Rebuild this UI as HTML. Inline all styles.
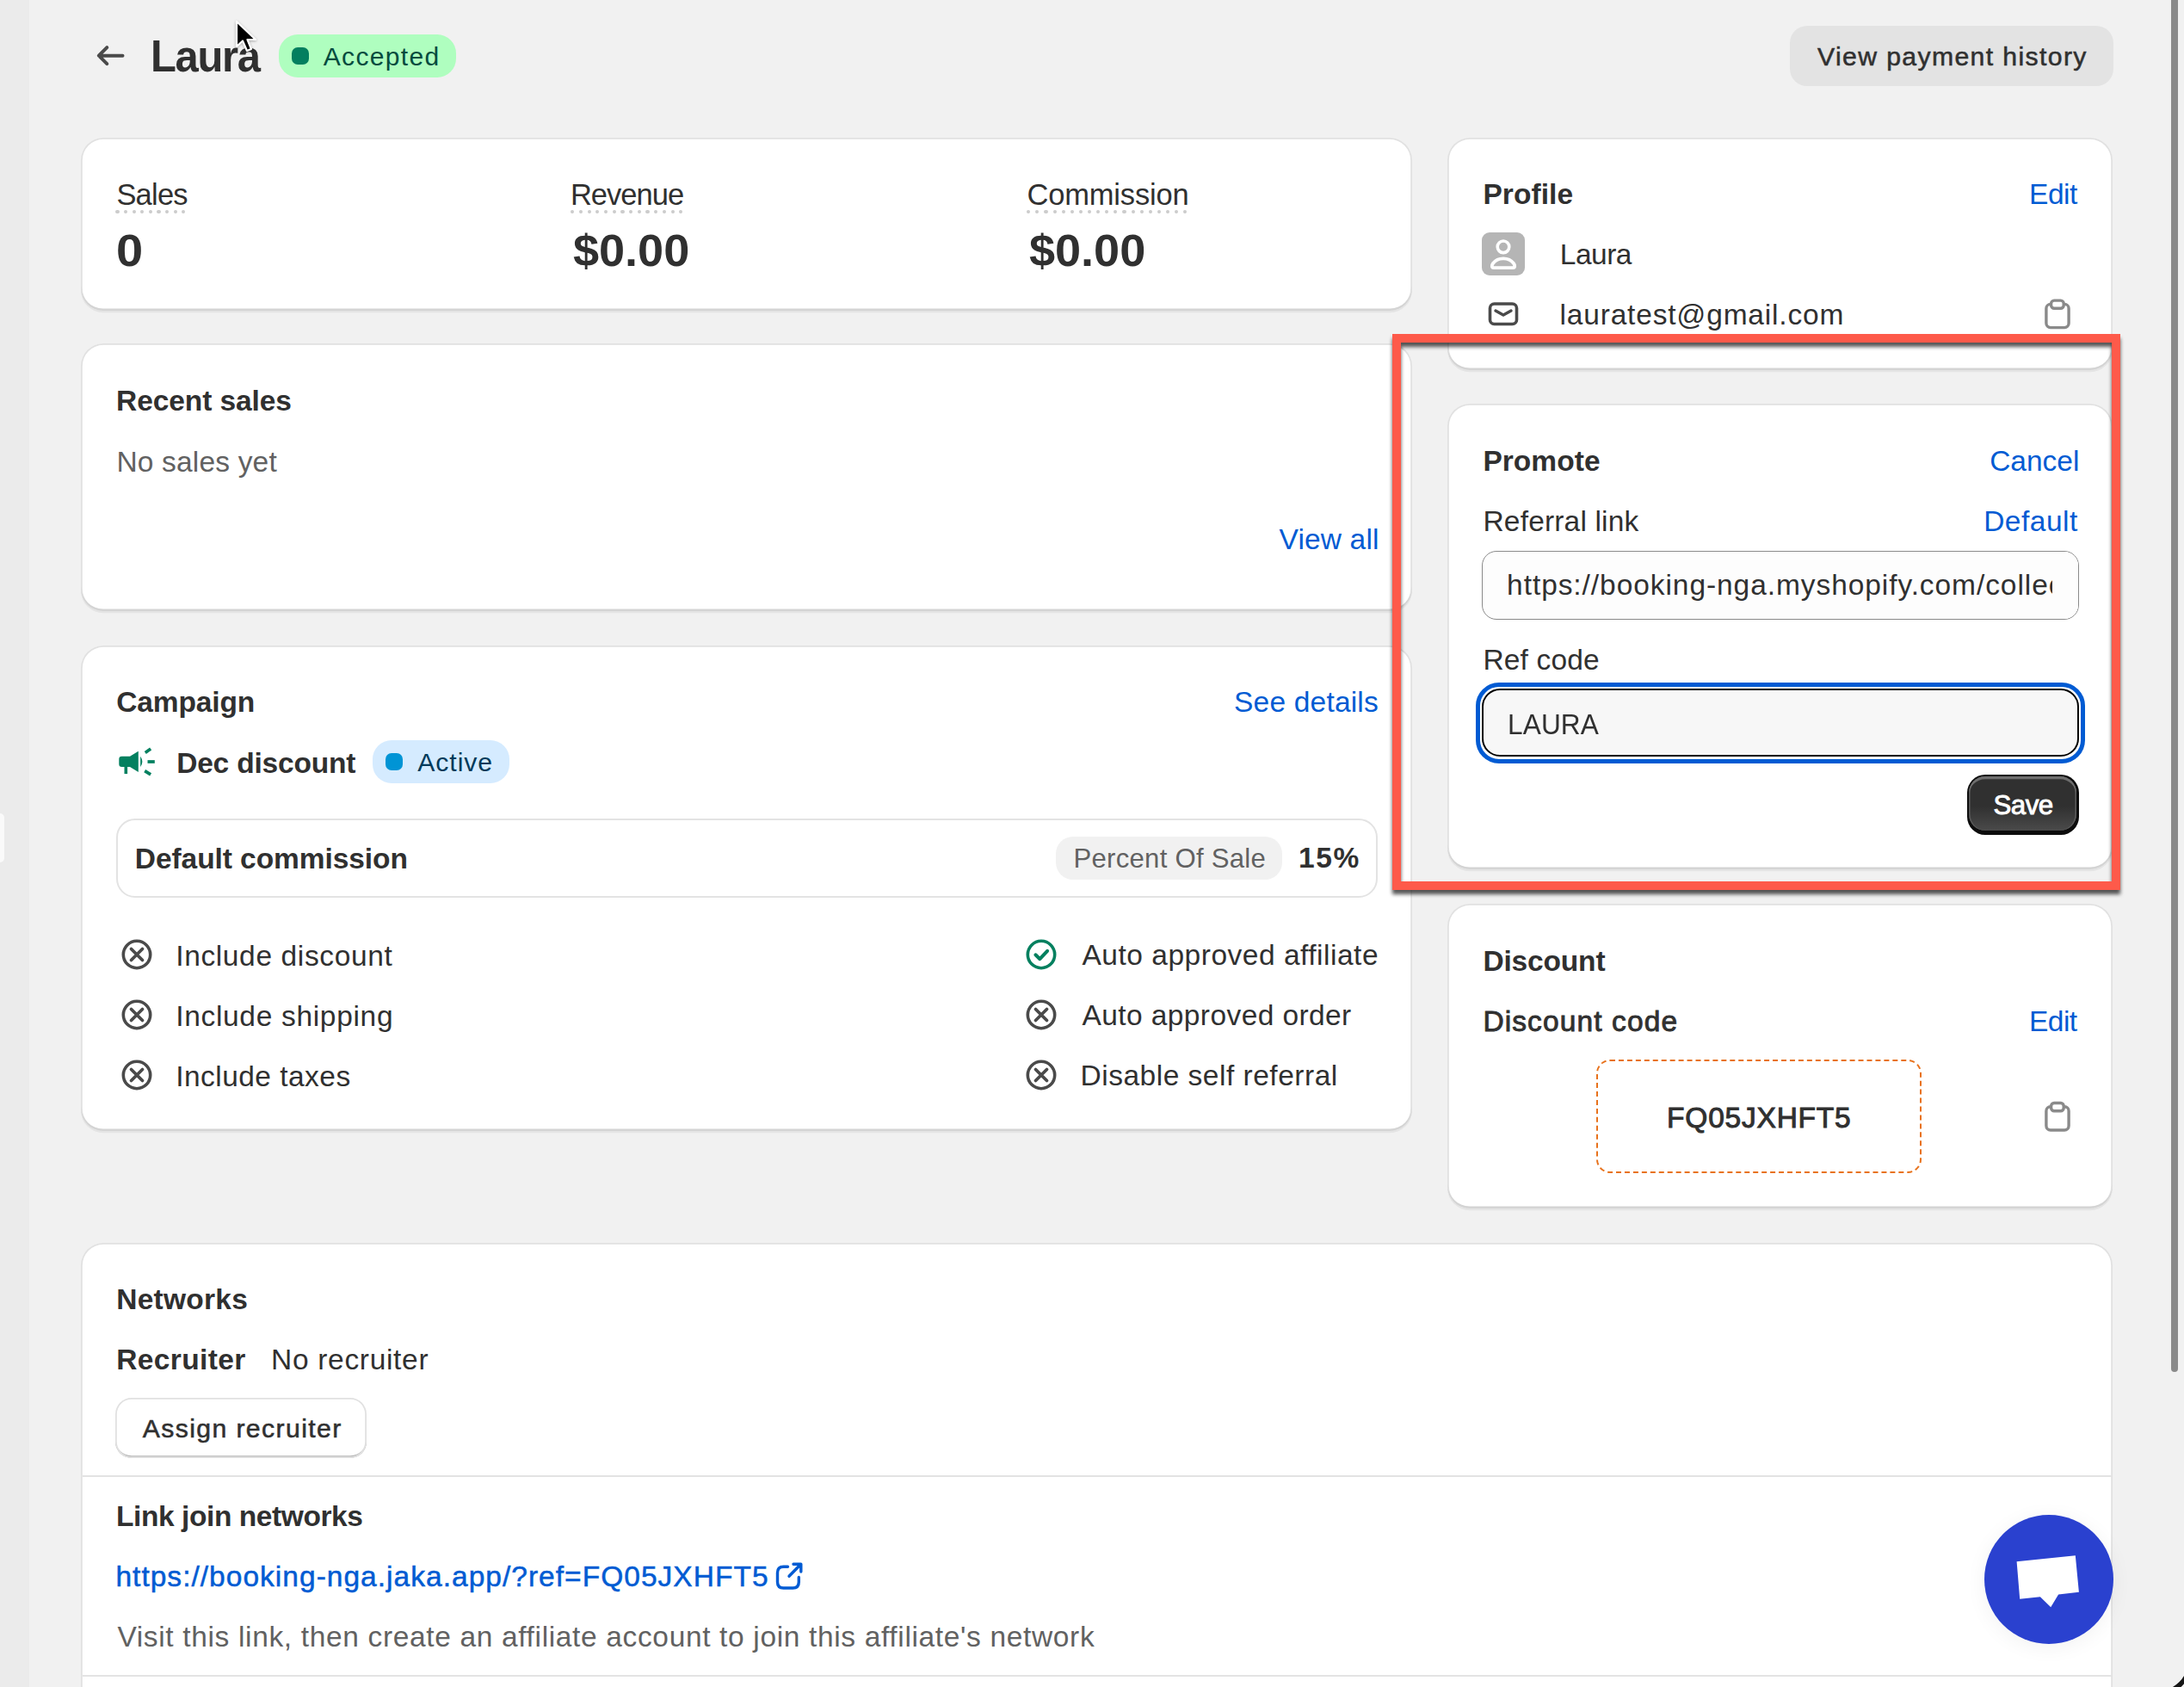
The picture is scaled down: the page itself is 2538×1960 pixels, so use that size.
<!DOCTYPE html>
<html><head><meta charset="utf-8"><style>
html,body{margin:0;padding:0}
body{width:2538px;height:1960px;overflow:hidden;background:#f1f1f1;position:relative;font-family:"Liberation Sans",sans-serif}
.t{position:absolute;white-space:nowrap;line-height:1;font-family:"Liberation Sans",sans-serif}
.card{position:absolute;background:#fff;border-radius:26px;box-shadow:0 2.2px 0 0 rgba(26,26,26,0.06), inset 0 -2.4px 0 0 #d4d4d4, inset 0 0 0 1.8px #e1e1e1;z-index:1}
.ov{position:absolute;left:0;top:0;z-index:6}
.abs{position:absolute}
</style></head><body>
<div class="abs" style="left:0;top:0;width:34px;height:1960px;background:#ebebeb"></div>
<div class="abs" style="left:-10px;top:944.5px;width:14.7px;height:57px;background:#fafafa;border-radius:5px"></div>
<div class="card" style="left:94.4px;top:160px;width:1547.1px;height:200.5px;"></div>
<div class="card" style="left:94.4px;top:399.4px;width:1547.1px;height:311.0px;"></div>
<div class="card" style="left:94.4px;top:750.2px;width:1547.1px;height:563.8px;"></div>
<div class="card" style="left:1682.2px;top:160.2px;width:773.3px;height:269.8px;"></div>
<div class="card" style="left:1682.2px;top:469.4px;width:773.3px;height:541.0px;"></div>
<div class="card" style="left:1682.2px;top:1050.2px;width:773.3px;height:354.0px;"></div>
<div class="card" style="left:94.4px;top:1444px;width:2361.1px;height:656px;"></div>
<!-- view payment history button -->
<div class="abs" style="left:2080px;top:30.3px;width:375.7px;height:69.3px;background:#e3e3e3;border-radius:20px;z-index:2"></div>
<!-- accepted badge -->
<div class="abs" style="left:324px;top:39.8px;width:206px;height:49.8px;background:#affebf;border-radius:22px;z-index:2"></div>
<div class="abs" style="left:339px;top:54.8px;width:20px;height:20.2px;background:#047f5f;border-radius:7px;z-index:3"></div>
<!-- active badge -->
<div class="abs" style="left:433px;top:860px;width:158.6px;height:49.8px;background:#d5ebff;border-radius:22px;z-index:2"></div>
<div class="abs" style="left:448px;top:874.6px;width:20px;height:20.4px;background:#0094d5;border-radius:7px;z-index:3"></div>
<!-- default commission box -->
<div class="abs" style="left:134.5px;top:950.7px;width:1466.5px;height:92.3px;box-sizing:border-box;border:2px solid #e3e3e3;border-radius:22px;z-index:2"></div>
<div class="abs" style="left:1227px;top:972px;width:262.7px;height:49.7px;background:#f1f1f1;border-radius:20px;z-index:2"></div>
<div style="position:absolute;left:134.40px;top:244.30px;width:4.2px;height:4.2px;border-radius:50%;background:#cccccc;z-index:5"></div><div style="position:absolute;left:144.01px;top:244.30px;width:4.2px;height:4.2px;border-radius:50%;background:#cccccc;z-index:5"></div><div style="position:absolute;left:153.62px;top:244.30px;width:4.2px;height:4.2px;border-radius:50%;background:#cccccc;z-index:5"></div><div style="position:absolute;left:163.24px;top:244.30px;width:4.2px;height:4.2px;border-radius:50%;background:#cccccc;z-index:5"></div><div style="position:absolute;left:172.85px;top:244.30px;width:4.2px;height:4.2px;border-radius:50%;background:#cccccc;z-index:5"></div><div style="position:absolute;left:182.46px;top:244.30px;width:4.2px;height:4.2px;border-radius:50%;background:#cccccc;z-index:5"></div><div style="position:absolute;left:192.08px;top:244.30px;width:4.2px;height:4.2px;border-radius:50%;background:#cccccc;z-index:5"></div><div style="position:absolute;left:201.69px;top:244.30px;width:4.2px;height:4.2px;border-radius:50%;background:#cccccc;z-index:5"></div><div style="position:absolute;left:211.30px;top:244.30px;width:4.2px;height:4.2px;border-radius:50%;background:#cccccc;z-index:5"></div>
<div style="position:absolute;left:663.20px;top:244.20px;width:4.2px;height:4.2px;border-radius:50%;background:#cccccc;z-index:5"></div><div style="position:absolute;left:672.89px;top:244.20px;width:4.2px;height:4.2px;border-radius:50%;background:#cccccc;z-index:5"></div><div style="position:absolute;left:682.58px;top:244.20px;width:4.2px;height:4.2px;border-radius:50%;background:#cccccc;z-index:5"></div><div style="position:absolute;left:692.28px;top:244.20px;width:4.2px;height:4.2px;border-radius:50%;background:#cccccc;z-index:5"></div><div style="position:absolute;left:701.97px;top:244.20px;width:4.2px;height:4.2px;border-radius:50%;background:#cccccc;z-index:5"></div><div style="position:absolute;left:711.66px;top:244.20px;width:4.2px;height:4.2px;border-radius:50%;background:#cccccc;z-index:5"></div><div style="position:absolute;left:721.35px;top:244.20px;width:4.2px;height:4.2px;border-radius:50%;background:#cccccc;z-index:5"></div><div style="position:absolute;left:731.05px;top:244.20px;width:4.2px;height:4.2px;border-radius:50%;background:#cccccc;z-index:5"></div><div style="position:absolute;left:740.74px;top:244.20px;width:4.2px;height:4.2px;border-radius:50%;background:#cccccc;z-index:5"></div><div style="position:absolute;left:750.43px;top:244.20px;width:4.2px;height:4.2px;border-radius:50%;background:#cccccc;z-index:5"></div><div style="position:absolute;left:760.12px;top:244.20px;width:4.2px;height:4.2px;border-radius:50%;background:#cccccc;z-index:5"></div><div style="position:absolute;left:769.82px;top:244.20px;width:4.2px;height:4.2px;border-radius:50%;background:#cccccc;z-index:5"></div><div style="position:absolute;left:779.51px;top:244.20px;width:4.2px;height:4.2px;border-radius:50%;background:#cccccc;z-index:5"></div><div style="position:absolute;left:789.20px;top:244.20px;width:4.2px;height:4.2px;border-radius:50%;background:#cccccc;z-index:5"></div>
<div style="position:absolute;left:1193.20px;top:244.20px;width:4.2px;height:4.2px;border-radius:50%;background:#cccccc;z-index:5"></div><div style="position:absolute;left:1203.31px;top:244.20px;width:4.2px;height:4.2px;border-radius:50%;background:#cccccc;z-index:5"></div><div style="position:absolute;left:1213.42px;top:244.20px;width:4.2px;height:4.2px;border-radius:50%;background:#cccccc;z-index:5"></div><div style="position:absolute;left:1223.53px;top:244.20px;width:4.2px;height:4.2px;border-radius:50%;background:#cccccc;z-index:5"></div><div style="position:absolute;left:1233.64px;top:244.20px;width:4.2px;height:4.2px;border-radius:50%;background:#cccccc;z-index:5"></div><div style="position:absolute;left:1243.76px;top:244.20px;width:4.2px;height:4.2px;border-radius:50%;background:#cccccc;z-index:5"></div><div style="position:absolute;left:1253.87px;top:244.20px;width:4.2px;height:4.2px;border-radius:50%;background:#cccccc;z-index:5"></div><div style="position:absolute;left:1263.98px;top:244.20px;width:4.2px;height:4.2px;border-radius:50%;background:#cccccc;z-index:5"></div><div style="position:absolute;left:1274.09px;top:244.20px;width:4.2px;height:4.2px;border-radius:50%;background:#cccccc;z-index:5"></div><div style="position:absolute;left:1284.20px;top:244.20px;width:4.2px;height:4.2px;border-radius:50%;background:#cccccc;z-index:5"></div><div style="position:absolute;left:1294.31px;top:244.20px;width:4.2px;height:4.2px;border-radius:50%;background:#cccccc;z-index:5"></div><div style="position:absolute;left:1304.42px;top:244.20px;width:4.2px;height:4.2px;border-radius:50%;background:#cccccc;z-index:5"></div><div style="position:absolute;left:1314.53px;top:244.20px;width:4.2px;height:4.2px;border-radius:50%;background:#cccccc;z-index:5"></div><div style="position:absolute;left:1324.64px;top:244.20px;width:4.2px;height:4.2px;border-radius:50%;background:#cccccc;z-index:5"></div><div style="position:absolute;left:1334.76px;top:244.20px;width:4.2px;height:4.2px;border-radius:50%;background:#cccccc;z-index:5"></div><div style="position:absolute;left:1344.87px;top:244.20px;width:4.2px;height:4.2px;border-radius:50%;background:#cccccc;z-index:5"></div><div style="position:absolute;left:1354.98px;top:244.20px;width:4.2px;height:4.2px;border-radius:50%;background:#cccccc;z-index:5"></div><div style="position:absolute;left:1365.09px;top:244.20px;width:4.2px;height:4.2px;border-radius:50%;background:#cccccc;z-index:5"></div><div style="position:absolute;left:1375.20px;top:244.20px;width:4.2px;height:4.2px;border-radius:50%;background:#cccccc;z-index:5"></div>
<!-- referral input -->
<div class="abs" style="left:1722px;top:640px;width:693.5px;height:79.5px;box-sizing:border-box;border:1.6px solid #8a8a8a;border-radius:17px;background:#fdfdfd;z-index:2;overflow:hidden">
  <div class="t" style="left:28.10px;top:21.74px;font-size:33.5px;color:#303030;letter-spacing:0.93px">https://booking-nga.myshopify.com/collections/all?ref=LAURA</div>
  <div class="abs" style="left:662.4px;top:0;width:40px;height:80px;background:#fdfdfd"></div>
</div>
<!-- ref code focus input -->
<div class="abs" style="left:1715px;top:793px;width:708px;height:94px;box-sizing:border-box;border:5.5px solid #005bd3;border-radius:27px;z-index:2"></div>
<div class="abs" style="left:1722px;top:800px;width:694px;height:79px;box-sizing:border-box;border:2.3px solid #000;border-radius:21px;background:#f7f7f7;z-index:2"></div>
<!-- save button -->
<div class="abs" style="left:2286px;top:900.1px;width:129.6px;height:69.6px;border-radius:21px;background:#0c0c0c;z-index:2"></div>
<div class="abs" style="left:2288.2px;top:902.2px;width:125.2px;height:62.4px;border-radius:19px;background:linear-gradient(#303030 55%,#4a4a4a);box-shadow:inset 0 3.2px 0 #6e6e6e, inset 1.6px 0 0 #5a5a5a, inset -1.6px 0 0 #5a5a5a;z-index:2"></div>
<!-- discount dashed -->
<div class="abs" style="left:1855.4px;top:1230.6px;width:377.3px;height:132.4px;box-sizing:border-box;border:2.4px dashed #e8721c;border-radius:16px;z-index:2"></div>
<!-- assign recruiter btn -->
<div class="abs" style="left:134.1px;top:1624.3px;width:292.2px;height:69.4px;box-sizing:border-box;border-radius:19px;background:#fff;box-shadow:inset 0 0 0 1.8px #e1e1e1, inset 0 -2.8px 0 #b3b3b3;z-index:2"></div>
<!-- networks dividers -->
<div class="abs" style="left:96px;top:1714px;width:2358px;height:2px;background:#e3e3e3;z-index:2"></div>
<div class="abs" style="left:96px;top:1946px;width:2358px;height:2px;background:#e3e3e3;z-index:2"></div>
<svg class="ov" width="2538" height="1960" viewBox="0 0 2538 1960"><circle cx="159" cy="1109" r="15.7" fill="none" stroke="#4a4a4a" stroke-width="3.6"/><path d="M152.5 1102.5L165.5 1115.5M165.5 1102.5L152.5 1115.5" stroke="#4a4a4a" stroke-width="3.8" stroke-linecap="round"/>
<circle cx="159" cy="1179" r="15.7" fill="none" stroke="#4a4a4a" stroke-width="3.6"/><path d="M152.5 1172.5L165.5 1185.5M165.5 1172.5L152.5 1185.5" stroke="#4a4a4a" stroke-width="3.8" stroke-linecap="round"/>
<circle cx="159" cy="1249" r="15.7" fill="none" stroke="#4a4a4a" stroke-width="3.6"/><path d="M152.5 1242.5L165.5 1255.5M165.5 1242.5L152.5 1255.5" stroke="#4a4a4a" stroke-width="3.8" stroke-linecap="round"/>
<circle cx="1210" cy="1109" r="15.7" fill="none" stroke="#03805f" stroke-width="3.6"/><path d="M1203.4 1109.3L1208.4 1114.2L1217.1 1104.8" fill="none" stroke="#03805f" stroke-width="4" stroke-linecap="round" stroke-linejoin="round"/>
<circle cx="1210" cy="1179" r="15.7" fill="none" stroke="#4a4a4a" stroke-width="3.6"/><path d="M1203.5 1172.5L1216.5 1185.5M1216.5 1172.5L1203.5 1185.5" stroke="#4a4a4a" stroke-width="3.8" stroke-linecap="round"/>
<circle cx="1210" cy="1249" r="15.7" fill="none" stroke="#4a4a4a" stroke-width="3.6"/><path d="M1203.5 1242.5L1216.5 1255.5M1216.5 1242.5L1203.5 1255.5" stroke="#4a4a4a" stroke-width="3.8" stroke-linecap="round"/>
<g fill="#03805f">
<path d="M141.5 878.7 H151 L160.8 872.7 V897 L151 891 H141.5 Q138.3 891 138.3 887.8 V881.9 Q138.3 878.7 141.5 878.7Z"/>
<rect x="144.5" y="890" width="3.6" height="9.1"/>
<path d="M163.2 878.7 Q167.5 884.9 163.2 891.1Z"/>
<path d="M168.8 874.5 L175.1 870.1" stroke="#03805f" stroke-width="3.6"/>
<path d="M171.5 885 H179.8" stroke="#03805f" stroke-width="3.7"/>
<path d="M168.2 895.6 L175.1 899.9" stroke="#03805f" stroke-width="3.6"/>
</g>
<path d="M142.5 64.7 H115 M124.3 55.2 L114.8 64.7 L124.3 74.2" fill="none" stroke="#4a4a4a" stroke-width="4" stroke-linecap="round" stroke-linejoin="round"/>
<rect x="1722" y="270" width="50" height="50" rx="9" fill="#b5b5b5"/><circle cx="1747" cy="286.8" r="6.8" fill="none" stroke="#fff" stroke-width="3.6"/><path d="M1736 311.1 C1733 311.1 1733.5 308 1735 306 C1738 302 1742 300.3 1747 300.3 C1752 300.3 1756 302 1759 306 C1760.5 308 1761 311.1 1758 311.1 Z" fill="none" stroke="#fff" stroke-width="3.8" stroke-linejoin="round"/>
<rect x="1731.5" y="353" width="31" height="23.5" rx="5" fill="none" stroke="#4a4a4a" stroke-width="3.6"/><path d="M1738 361 L1747 366 L1756 361" fill="none" stroke="#4a4a4a" stroke-width="3.4" stroke-linecap="round" stroke-linejoin="round"/>
<path d="M2383.2 352.9 H2381.2 Q2377.8999999999996 352.9 2377.8999999999996 356.4 V0" fill="none"/><rect x="2377.8999999999996" y="353.4" width="26.2" height="27.2" rx="5" fill="none" stroke="#8a8a8a" stroke-width="3.4"/><rect x="2383.6" y="349.09999999999997" width="14.6" height="9.2" rx="3.5" fill="#fff" stroke="#8a8a8a" stroke-width="3.4"/>
<path d="M2383.2 1285.3 H2381.2 Q2377.8999999999996 1285.3 2377.8999999999996 1288.8 V0" fill="none"/><rect x="2377.8999999999996" y="1285.8" width="26.2" height="27.2" rx="5" fill="none" stroke="#8a8a8a" stroke-width="3.4"/><rect x="2383.6" y="1281.5" width="14.6" height="9.2" rx="3.5" fill="#fff" stroke="#8a8a8a" stroke-width="3.4"/>
<g fill="none" stroke="#005bd3" stroke-width="3.4" stroke-linecap="round" stroke-linejoin="round"><path d="M915.5 1820.3 H910.5 Q903.5 1820.3 903.5 1827.3 V1838 Q903.5 1845 910.5 1845 H921.3 Q928.3 1845 928.3 1838 V1832.5"/><path d="M922 1817.3 H930.8 V1826 M930.3 1817.8 L917 1831.3"/></g></svg>
<div class="t" style="left:175.05px;top:40.11px;font-size:51.5px;font-weight:700;color:#303030;z-index:5;letter-spacing:-1.374px;transform:scaleX(0.95);transform-origin:0 0;">Laura</div>
<div class="t" style="left:375.80px;top:50.81px;font-size:30px;font-weight:400;color:#024b3e;z-index:5;letter-spacing:1.315px;">Accepted</div>
<div class="t" style="left:2112.00px;top:50.64px;font-size:30.2px;font-weight:400;color:#303030;z-index:5;letter-spacing:1.371px;-webkit-text-stroke:0.55px #303030;">View payment history</div>
<div class="t" style="left:135.40px;top:208.50px;font-size:34.5px;font-weight:400;color:#303030;z-index:5;letter-spacing:-0.788px;">Sales</div>
<div class="t" style="left:662.90px;top:208.50px;font-size:34.5px;font-weight:400;color:#303030;z-index:5;letter-spacing:-0.986px;">Revenue</div>
<div class="t" style="left:1193.50px;top:208.50px;font-size:34.5px;font-weight:400;color:#303030;z-index:5;letter-spacing:-0.177px;">Commission</div>
<div class="t" style="left:135.27px;top:264.66px;font-size:52.5px;font-weight:700;color:#303030;z-index:5;transform:scaleX(1.066);transform-origin:0 0;">0</div>
<div class="t" style="left:666.30px;top:264.66px;font-size:52.5px;font-weight:700;color:#303030;z-index:5;letter-spacing:-0.021px;transform:scaleX(1.03);transform-origin:0 0;">$0.00</div>
<div class="t" style="left:1195.50px;top:264.66px;font-size:52.5px;font-weight:700;color:#303030;z-index:5;letter-spacing:-0.021px;transform:scaleX(1.03);transform-origin:0 0;">$0.00</div>
<div class="t" style="left:135.10px;top:448.94px;font-size:33.5px;font-weight:700;color:#303030;z-index:5;letter-spacing:-0.092px;">Recent sales</div>
<div class="t" style="left:135.40px;top:519.64px;font-size:33.5px;font-weight:400;color:#616161;z-index:5;letter-spacing:0.180px;">No sales yet</div>
<div class="t" style="left:1486.50px;top:609.84px;font-size:33.5px;font-weight:400;color:#005bd3;z-index:5;letter-spacing:0.159px;">View all</div>
<div class="t" style="left:135.30px;top:799.44px;font-size:33.5px;font-weight:700;color:#303030;z-index:5;letter-spacing:-0.139px;">Campaign</div>
<div class="t" style="left:1434.00px;top:798.64px;font-size:33.5px;font-weight:400;color:#005bd3;z-index:5;letter-spacing:0.200px;">See details</div>
<div class="t" style="left:205.20px;top:869.54px;font-size:33.5px;font-weight:700;color:#303030;z-index:5;letter-spacing:-0.199px;">Dec discount</div>
<div class="t" style="left:485.30px;top:870.94px;font-size:30.2px;font-weight:400;color:#003a5a;z-index:5;letter-spacing:0.917px;">Active</div>
<div class="t" style="left:156.80px;top:981.14px;font-size:33.5px;font-weight:700;color:#303030;z-index:5;letter-spacing:-0.068px;">Default commission</div>
<div class="t" style="left:1247.50px;top:981.97px;font-size:31.1px;font-weight:400;color:#616161;z-index:5;letter-spacing:0.271px;">Percent Of Sale</div>
<div class="t" style="left:1508.90px;top:980.14px;font-size:33.5px;font-weight:700;color:#303030;z-index:5;letter-spacing:1.669px;">15%</div>
<div class="t" style="left:204.20px;top:1093.54px;font-size:33.5px;font-weight:400;color:#303030;z-index:5;letter-spacing:0.633px;">Include discount</div>
<div class="t" style="left:1257.50px;top:1092.84px;font-size:33.5px;font-weight:400;color:#303030;z-index:5;letter-spacing:0.512px;">Auto approved affiliate</div>
<div class="t" style="left:204.20px;top:1163.54px;font-size:33.5px;font-weight:400;color:#303030;z-index:5;letter-spacing:0.681px;">Include shipping</div>
<div class="t" style="left:1257.50px;top:1162.84px;font-size:33.5px;font-weight:400;color:#303030;z-index:5;letter-spacing:0.407px;">Auto approved order</div>
<div class="t" style="left:204.20px;top:1233.54px;font-size:33.5px;font-weight:400;color:#303030;z-index:5;letter-spacing:0.462px;">Include taxes</div>
<div class="t" style="left:1255.50px;top:1232.84px;font-size:33.5px;font-weight:400;color:#303030;z-index:5;letter-spacing:0.508px;">Disable self referral</div>
<div class="t" style="left:1723.40px;top:209.14px;font-size:33.5px;font-weight:700;color:#303030;z-index:5;letter-spacing:0.064px;">Profile</div>
<div class="t" style="left:2358.10px;top:209.04px;font-size:33.5px;font-weight:400;color:#005bd3;z-index:5;letter-spacing:-0.539px;">Edit</div>
<div class="t" style="left:1812.80px;top:279.14px;font-size:33.5px;font-weight:400;color:#303030;z-index:5;letter-spacing:-0.512px;">Laura</div>
<div class="t" style="left:1812.50px;top:349.14px;font-size:33.5px;font-weight:400;color:#303030;z-index:5;letter-spacing:0.820px;">lauratest@gmail.com</div>
<div class="t" style="left:1723.40px;top:518.94px;font-size:33.5px;font-weight:700;color:#303030;z-index:5;letter-spacing:0.042px;">Promote</div>
<div class="t" style="left:2312.16px;top:519.14px;font-size:33.5px;font-weight:400;color:#005bd3;z-index:5;">Cancel</div>
<div class="t" style="left:1723.50px;top:589.14px;font-size:33.5px;font-weight:400;color:#303030;z-index:5;letter-spacing:0.169px;">Referral link</div>
<div class="t" style="left:2305.20px;top:589.44px;font-size:33.5px;font-weight:400;color:#005bd3;z-index:5;letter-spacing:0.494px;">Default</div>
<div class="t" style="left:1723.50px;top:749.64px;font-size:33.5px;font-weight:400;color:#303030;z-index:5;letter-spacing:0.150px;">Ref code</div>
<div class="t" style="left:1752.34px;top:824.02px;font-size:34px;font-weight:400;color:#303030;z-index:8;letter-spacing:0.114px;transform:scaleX(0.93);transform-origin:0 0;">LAURA</div>
<div class="t" style="left:2316.50px;top:920.20px;font-size:31.3px;font-weight:400;color:#ffffff;z-index:8;letter-spacing:-0.543px;-webkit-text-stroke:0.9px #ffffff;">Save</div>
<div class="t" style="left:1723.40px;top:1099.64px;font-size:33.5px;font-weight:700;color:#303030;z-index:5;letter-spacing:-0.165px;">Discount</div>
<div class="t" style="left:1723.40px;top:1169.84px;font-size:33.5px;font-weight:400;color:#303030;z-index:5;letter-spacing:1.112px;-webkit-text-stroke:0.9px #303030;">Discount code</div>
<div class="t" style="left:2358.00px;top:1169.84px;font-size:33.5px;font-weight:400;color:#005bd3;z-index:5;letter-spacing:-0.539px;">Edit</div>
<div class="t" style="left:1937.10px;top:1281.64px;font-size:33.5px;font-weight:400;color:#303030;z-index:5;letter-spacing:0.778px;-webkit-text-stroke:1.0px #303030;">FQ05JXHFT5</div>
<div class="t" style="left:135.20px;top:1493.14px;font-size:33.5px;font-weight:700;color:#303030;z-index:5;letter-spacing:0.262px;">Networks</div>
<div class="t" style="left:135.20px;top:1563.14px;font-size:33.5px;font-weight:700;color:#303030;z-index:5;letter-spacing:0.369px;">Recruiter</div>
<div class="t" style="left:315.10px;top:1563.14px;font-size:33.5px;font-weight:400;color:#303030;z-index:5;letter-spacing:0.679px;">No recruiter</div>
<div class="t" style="left:165.70px;top:1644.84px;font-size:30.2px;font-weight:400;color:#303030;z-index:8;letter-spacing:1.390px;-webkit-text-stroke:0.55px #303030;">Assign recruiter</div>
<div class="t" style="left:135.00px;top:1744.74px;font-size:33.5px;font-weight:700;color:#303030;z-index:5;letter-spacing:-0.421px;">Link join networks</div>
<div class="t" style="left:134.40px;top:1815.44px;font-size:33.5px;font-weight:400;color:#005bd3;z-index:5;letter-spacing:1.023px;-webkit-text-stroke:0.5px #005bd3;">https://booking-nga.jaka.app/?ref=FQ05JXHFT5</div>
<div class="t" style="left:136.40px;top:1885.14px;font-size:33.5px;font-weight:400;color:#616161;z-index:5;letter-spacing:0.649px;">Visit this link, then create an affiliate account to join this affiliate&#x27;s network</div>
<!-- chat bubble -->
<div class="abs" style="left:2306px;top:1760px;width:150px;height:150px;border-radius:50%;background:#2a41cf;box-shadow:0 4px 24px rgba(0,0,0,0.055);z-index:9"></div>
<svg class="abs" style="left:0;top:0;z-index:10" width="2538" height="1960"><path d="M2343.6 1814.3 L2411.8 1807.3 L2415.9 1849.8 L2392.1 1852.5 L2383.2 1867.2 L2370.9 1855.2 L2347.2 1857.7 Z" fill="#fff"/></svg>
<!-- scrollbar -->
<div class="abs" style="left:2523px;top:-10px;width:8px;height:1604px;background:#8a8a8a;border-radius:4px;z-index:11"></div>
<!-- red annotation -->
<div class="abs" style="left:1618px;top:388px;width:846px;height:646px;box-sizing:border-box;border:10px solid #fe5a4a;z-index:12;filter:drop-shadow(0 5px 2.2px rgba(0,0,0,0.66))"></div>
<!-- window corner -->
<svg class="abs" style="left:2478px;top:1900px;z-index:13" width="60" height="60"><path d="M60 56.3 A38.5 38.5 0 0 1 56.3 60 H60Z" fill="#f4f4f4"/><path d="M66.75 30 A35.75 35.75 0 0 1 30 66.75" fill="none" stroke="#161616" stroke-width="5.5"/></svg>
<!-- cursor -->
<svg class="abs" style="left:271px;top:22px;z-index:14;filter:drop-shadow(0 1.5px 1.5px rgba(0,0,0,0.3))" width="40" height="45" viewBox="0 0 40 45"><path d="M4 3 L4 32 L11 25.5 L16 37 L21 35 L16.5 24 L26 24 Z" fill="#000" stroke="#fff" stroke-width="2.2" stroke-linejoin="round"/></svg>
</body></html>
